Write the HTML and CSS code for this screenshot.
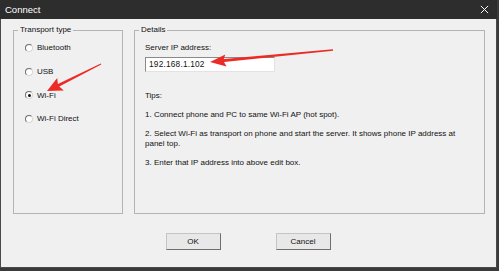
FILE: index.html
```html
<!DOCTYPE html>
<html>

<head>
  <meta charset="UTF-8">
  <link rel="stylesheet" href="styles.css">
</head>

<body>
  <div class="dialog">
    <div class="title-bar">
      <span class="title">Connect</span>
      <svg class="close" viewBox="0 0 10 10" xmlns="http://www.w3.org/2000/svg">
        <path d="m1 1 8 8m0-8-8 8" stroke="#fff" stroke-width="1.1" fill="none"/>
      </svg>
    </div>
    <div class="dialog-body">
      <div class="groups">
        <fieldset class="group transport">
          <legend>Transport type</legend>
          <div class="radio-list">
            <label class="radio-row"><span class="radio"></span>Bluetooth</label>
            <label class="radio-row"><span class="radio"></span>USB</label>
            <label class="radio-row"><span class="radio checked"></span>Wi-Fi</label>
            <label class="radio-row"><span class="radio"></span>Wi-Fi Direct</label>
          </div>
        </fieldset>
        <fieldset class="group details">
          <legend>Details</legend>
          <div class="details-content">
            <div class="field-label">Server IP address:</div>
            <div class="edit-box">192.168.1.102</div>
            <p class="tips-title">Tips:</p>
            <p>1. Connect phone and PC to same Wi-Fi AP (hot spot).</p>
            <p>2. Select Wi-Fi as transport on phone and start the server. It shows phone IP address at panel top.</p>
            <p>3. Enter that IP address into above edit box.</p>
          </div>
        </fieldset>
      </div>
      <div class="button-row">
        <button type="button" class="btn">OK</button>
        <button type="button" class="btn">Cancel</button>
      </div>
    </div>
  </div>

  <!-- red annotation arrows drawn over the screenshot -->
  <svg class="annotations" viewBox="0 0 499 271" xmlns="http://www.w3.org/2000/svg">
    <polygon fill="#ec2b26" points="210,62 225.3,54.4 223.8,59.1 333,49.3 333,50.7 224,62.1 226.5,66.4"/>
    <polygon fill="#ec2b26" points="47,91 57.2,77.9 57.9,83.9 100.8,63.4 101.2,64.6 59.3,86.5 63.8,90.4"/>
  </svg>
</body>

</html>
```

FILE: styles.css
```css
html {
    box-sizing: border-box;
    font-family: 'Liberation Sans', Arial, sans-serif;
    font-size: 8px;
}

*, ::before, ::after {
    box-sizing: inherit;
}

body {
    margin: 0;
    width: 499px;
    height: 271px;
    background-color: #3a3a3a;
    overflow: hidden;
}

/* DIALOG FRAME */

.dialog {
    display: flex;
    flex-direction: column;
    width: 497px;
    height: 268px;
    border: 1px solid #4a4a4a;
    border-top: none;
    background-color: #f0f0f0;
    color: #111;
}

.title-bar {
    display: flex;
    align-items: center;
    justify-content: space-between;
    height: 19px;
    margin: 0 -1px;
    padding: 0 8px 0 5px;
    background-color: #2d2d2d;
    color: #fff;
}

.title {
    font-size: 9.5px;
}

.close {
    width: 9px;
    height: 9px;
}

.dialog-body {
    display: flex;
    flex-direction: column;
    padding: 5px 11px 0 12px;
}

/* GROUP BOXES */

.groups {
    display: flex;
    gap: 11px;
}

.group {
    height: 190px;
    margin: 0;
    padding: 0;
    border: 1px solid #b4b4b4;
}

.group legend {
    margin-left: 4px;
    padding: 0 2px;
    line-height: 12px;
}

.transport {
    width: 110px;
}

.details {
    width: 351px;
}

/* RADIO BUTTONS */

.radio-list {
    display: flex;
    flex-direction: column;
    padding-left: 11px;
}

.radio-row {
    display: flex;
    align-items: center;
    gap: 4px;
    height: 23.7px;
}

.radio {
    display: inline-flex;
    align-items: center;
    justify-content: center;
    width: 8px;
    height: 8px;
    border: 1px solid;
    border-color: #6e6e6e #d6d6d6 #d6d6d6 #6e6e6e;
    border-radius: 50%;
    background-color: #fff;
}

.radio.checked::after {
    content: "";
    width: 3px;
    height: 3px;
    border-radius: 50%;
    background-color: #111;
}

/* DETAILS */

.details-content {
    padding: 0 10px;
    line-height: 10px;
}

.field-label {
    margin-top: 7px;
}

.edit-box {
    width: 130px;
    height: 15px;
    margin-top: 4px;
    padding-left: 3px;
    border: 1px solid;
    border-color: #8a8a8a #e3e3e3 #e3e3e3 #8a8a8a;
    background-color: #fff;
    font-size: 8.3px;
    line-height: 13px;
    letter-spacing: 0.2px;
}

.details-content p {
    width: 325px;
    margin: 9px 0 0;
}

.details-content .tips-title {
    margin-top: 19px;
}

/* BUTTONS */

.button-row {
    display: flex;
    justify-content: center;
    gap: 55px;
    margin-top: 19px;
    padding-right: 2px;
}

.btn {
    width: 55px;
    height: 17px;
    padding: 0;
    border: 1px solid;
    border-color: #c4c4c4 #6f6f6f #6f6f6f #c4c4c4;
    background-color: #e8e8e8;
    color: #111;
    font-family: inherit;
    font-size: 8px;
}

/* ANNOTATIONS */

.annotations {
    position: absolute;
    top: 0;
    left: 0;
    width: 499px;
    height: 271px;
    pointer-events: none;
}
```
